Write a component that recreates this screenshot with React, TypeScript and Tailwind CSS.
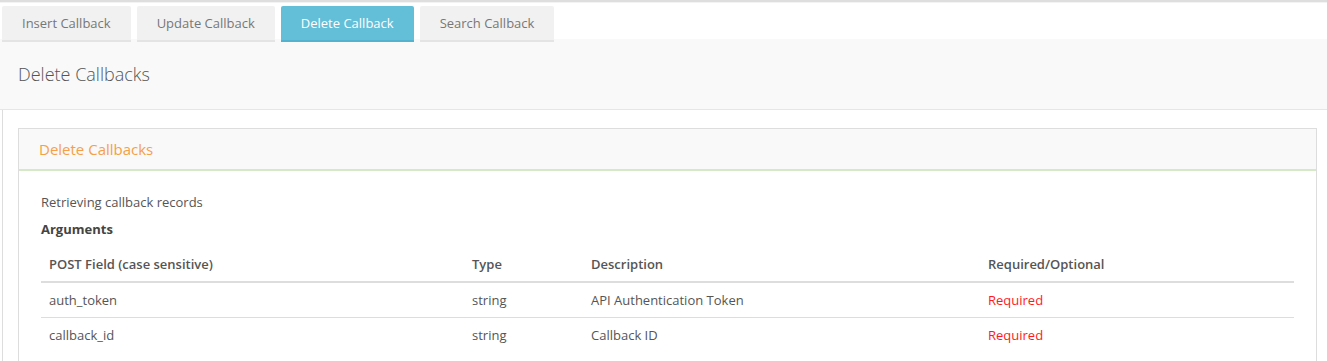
const tabs = ["Insert Callback", "Update Callback", "Delete Callback", "Search Callback"];

const args = [
  { field: "auth_token", type: "string", description: "API Authentication Token" },
  { field: "callback_id", type: "string", description: "Callback ID" },
];

export default function App() {
  const active = "Delete Callback";

  return (
    <div className="min-h-[361px] bg-white font-['Open_Sans',sans-serif] text-[13px] text-[#555]">
      <div className="h-[3px] border-t-2 border-[#dedede] bg-[#f3f3f3]" />

      <div className="relative z-10 -mb-[3px] ml-[2px] mt-[3px] flex gap-[6px]">
        {tabs.map((tab) => {
          const isActive = tab === active;
          return (
            <button
              key={tab}
              type="button"
              className={
                isActive
                  ? "h-[36px] rounded-t-[2px] border-b-2 border-[#52b2cf] bg-[#63bed8] px-[20px] pb-[1px] leading-[18px] text-white"
                  : "h-[36px] rounded-t-[2px] border-b-2 border-[#e4e4e4] bg-[#f1f1f1] px-[20px] pb-[1px] leading-[18px] text-[#777]"
              }
            >
              {tab}
            </button>
          );
        })}
      </div>

      <div className="flex h-[71px] items-center border-b border-[#e6e6e6] bg-[#f9f9f9] px-[18px] pt-[1px]">
        <h1 className="text-[18px] font-light text-[#555]">Delete Callbacks</h1>
      </div>

      <div className="ml-[2px] mr-[10px] border-l border-[#dddddd] pl-[15px] pt-[18px]">
        <section className="border border-[#dddddd]">
          <div className="flex h-[42px] items-center border-b-2 border-[#d6e9c6] bg-[#f9f9f9] px-[20px]">
            <h2 className="text-[15px] text-[#f5a047]">Delete Callbacks</h2>
          </div>

          <div className="px-[22px] pb-[10px] pt-[22px]">
            <p className="leading-[19px] text-[#555]">Retrieving callback records</p>
            <p className="mt-[8px] font-bold leading-[19px] text-[#444]">Arguments</p>

            <table className="mt-[8px] w-full border-collapse text-left">
              <thead>
                <tr className="border-b-2 border-[#dddddd]">
                  <th className="w-[423px] px-[8px] pb-[7px] pt-[8px] font-semibold leading-[18.5px] text-[#555]">
                    POST Field (case sensitive)
                  </th>
                  <th className="w-[119px] px-[8px] pb-[7px] pt-[8px] font-semibold leading-[18.5px] text-[#555]">
                    Type
                  </th>
                  <th className="w-[397px] px-[8px] pb-[7px] pt-[8px] font-semibold leading-[18.5px] text-[#555]">
                    Description
                  </th>
                  <th className="px-[8px] pb-[7px] pt-[8px] font-semibold leading-[18.5px] text-[#555]">
                    Required/Optional
                  </th>
                </tr>
              </thead>
              <tbody>
                {args.map((arg, i) => (
                  <tr key={arg.field} className={i > 0 ? "border-t border-[#dddddd]" : ""}>
                    <td className="px-[8px] py-[8px] leading-[18.5px]">{arg.field}</td>
                    <td className="px-[8px] py-[8px] leading-[18.5px]">{arg.type}</td>
                    <td className="px-[8px] py-[8px] leading-[18.5px]">{arg.description}</td>
                    <td className="px-[8px] py-[8px] leading-[18.5px] text-[#ff1a1a]">Required</td>
                  </tr>
                ))}
              </tbody>
            </table>
          </div>
        </section>
      </div>
    </div>
  );
}
